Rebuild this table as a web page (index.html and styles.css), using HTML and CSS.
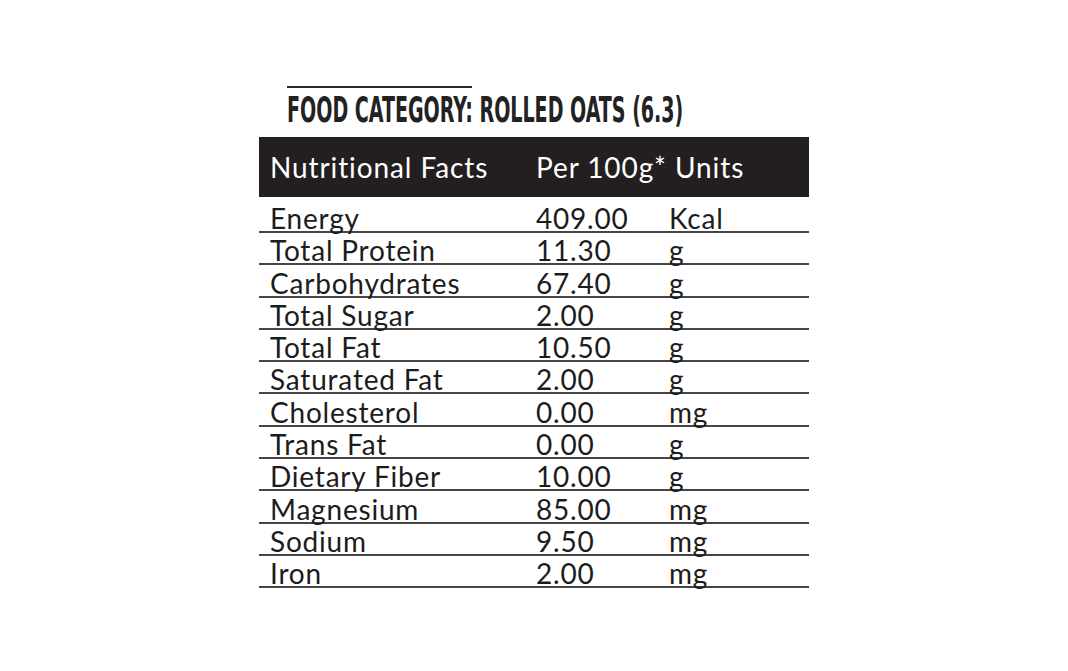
FILE: index.html
```html
<!DOCTYPE html>
<html>
<head>
<meta charset="utf-8">
<link rel="stylesheet" href="styles.css">
</head>
<body>
<div class="panel">
  <div class="top-rule"></div>
  <h1 class="title"><span class="title-text">FOOD CATEGORY: ROLLED OATS (6.3)</span></h1>
  <div class="head">
    <span>Nutritional Facts</span>
    <span>Per 100g* Units</span>
  </div>
  <div class="rows">
    <div class="row first"><span>Energy</span><span>409.00</span><span>Kcal</span></div>
    <div class="row"><span>Total Protein</span><span>11.30</span><span>g</span></div>
    <div class="row"><span>Carbohydrates</span><span>67.40</span><span>g</span></div>
    <div class="row"><span>Total Sugar</span><span>2.00</span><span>g</span></div>
    <div class="row"><span>Total Fat</span><span>10.50</span><span>g</span></div>
    <div class="row"><span>Saturated Fat</span><span>2.00</span><span>g</span></div>
    <div class="row"><span>Cholesterol</span><span>0.00</span><span>mg</span></div>
    <div class="row"><span>Trans Fat</span><span>0.00</span><span>g</span></div>
    <div class="row"><span>Dietary Fiber</span><span>10.00</span><span>g</span></div>
    <div class="row"><span>Magnesium</span><span>85.00</span><span>mg</span></div>
    <div class="row"><span>Sodium</span><span>9.50</span><span>mg</span></div>
    <div class="row"><span>Iron</span><span>2.00</span><span>mg</span></div>
  </div>
</div>
</body>
</html>
```
FILE: styles.css
```css
html, body {
  margin: 0;
  padding: 0;
  background: #ffffff;
}
body {
  width: 1068px;
  height: 671px;
  overflow: hidden;
}
.panel {
  width: 550px;
  margin: 0 auto;
  padding-top: 86px;
  font-family: Lato, "Open Sans", sans-serif;
  font-variant-ligatures: none;
  color: #1c1c1c;
}
.top-rule {
  width: 185px;
  height: 2px;
  margin-left: 28px;
  background: #2a2a2a;
}
.title {
  margin: 0;
  height: 49px;
  padding-left: 28px;
  font-family: "DejaVu Sans Condensed", "DejaVu Sans", sans-serif;
  font-weight: bold;
  font-size: 35px;
  line-height: 44px;
  white-space: nowrap;
  color: #222;
}
.title-text {
  display: inline-block;
  transform: scaleX(0.605);
  transform-origin: left center;
}
.head {
  height: 60px;
  background: #231f20;
  color: #ffffff;
  display: grid;
  grid-template-columns: 266px 1fr;
  padding-left: 11px;
  align-items: center;
  font-size: 28px;
  line-height: 30px;
  letter-spacing: 0.9px;
}
.rows {
  display: flex;
  flex-direction: column;
}
.row {
  height: 30.3px;
  border-bottom: 2px solid #454545;
  display: grid;
  grid-template-columns: 266px 133px 1fr;
  padding-left: 11px;
  align-items: end;
  font-size: 28px;
  letter-spacing: 0.8px;
}
.row.first {
  height: 34px;
}
.row span {
  line-height: 20px;
  margin-bottom: 3px;
  white-space: nowrap;
}
```
